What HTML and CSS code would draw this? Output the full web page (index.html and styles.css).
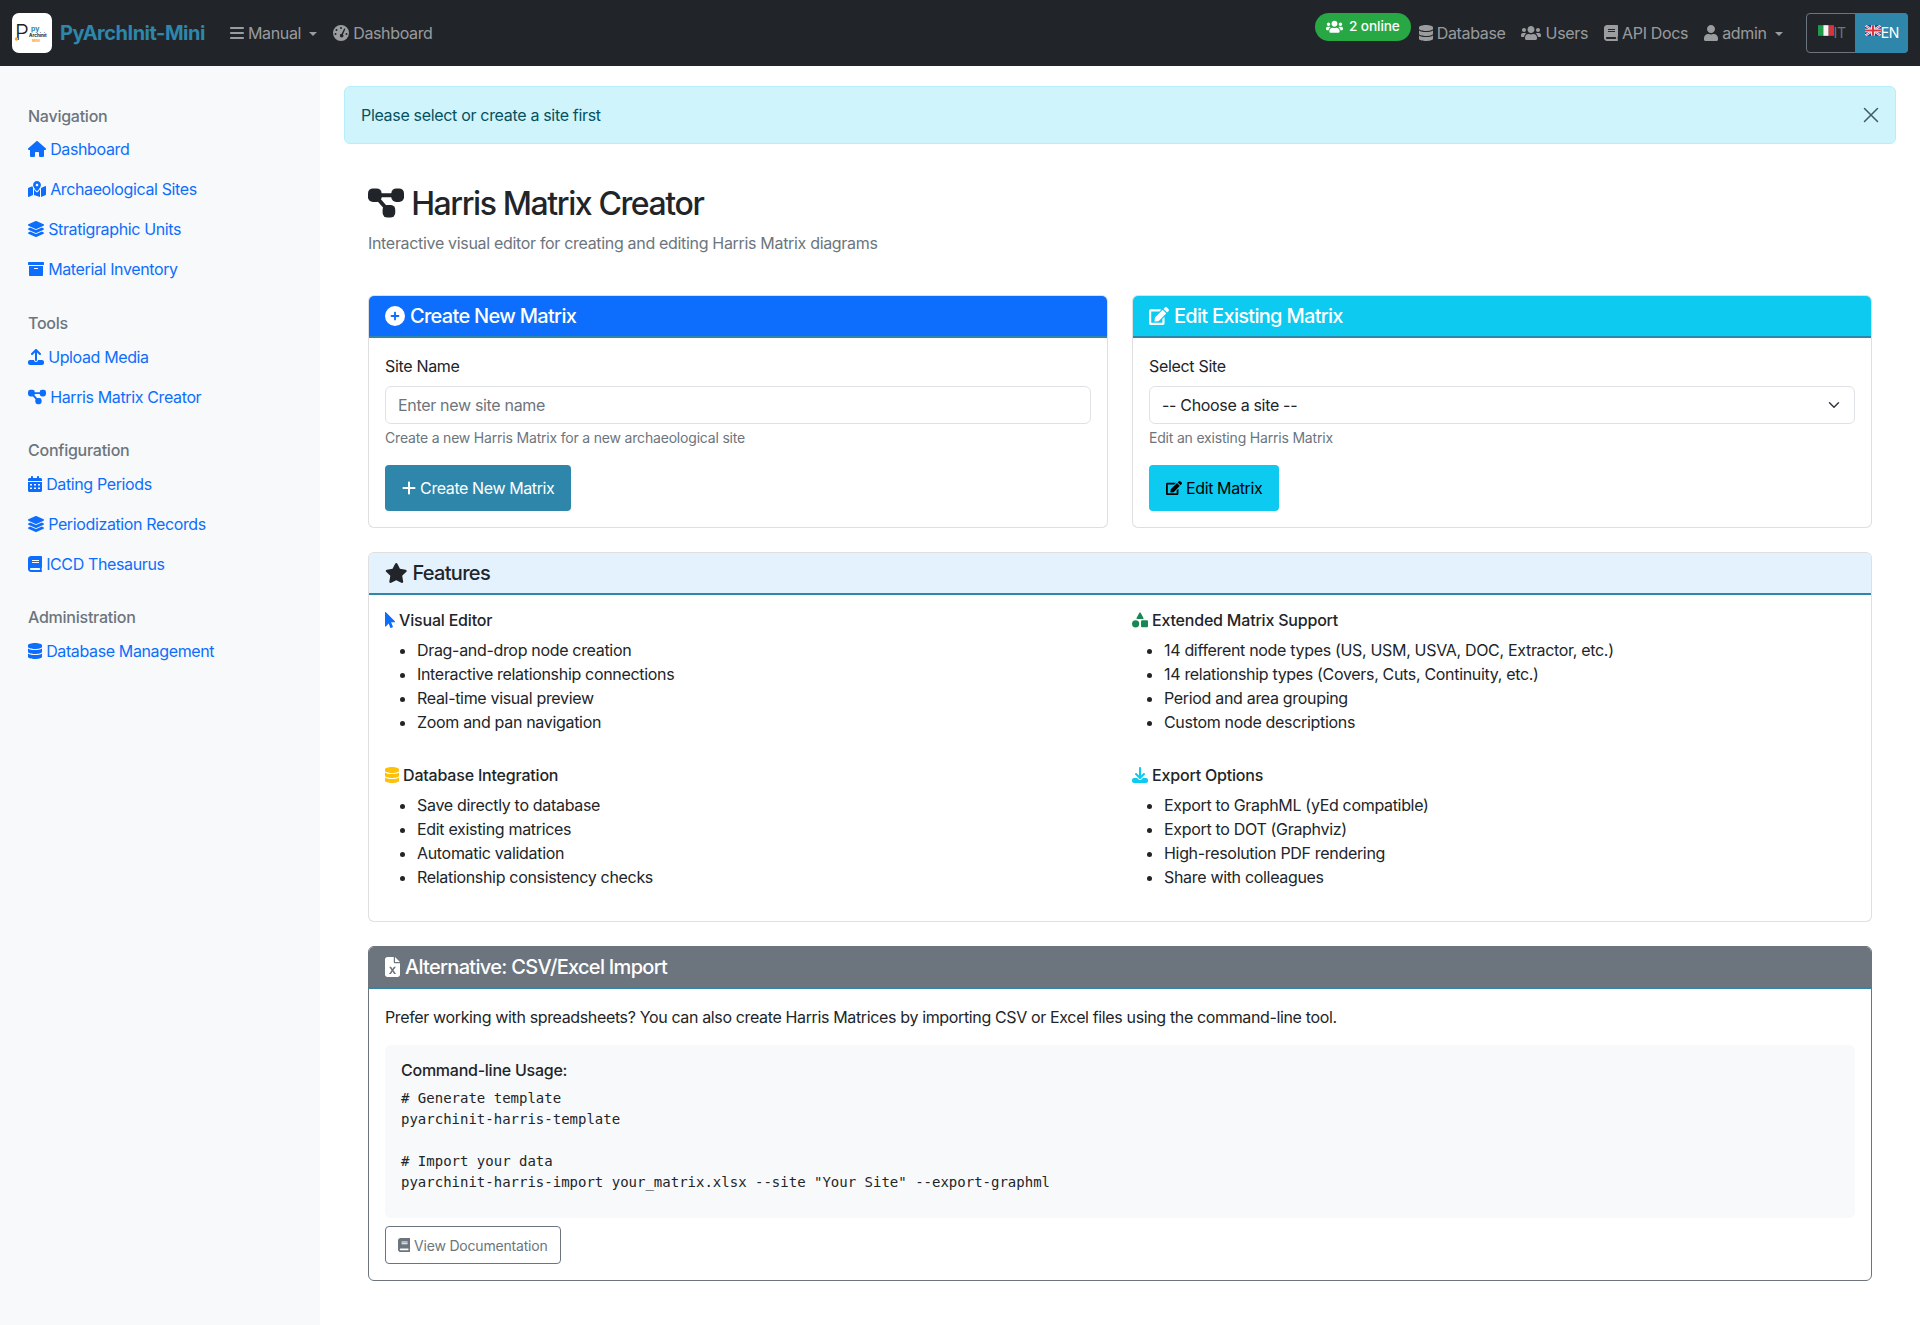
FILE: index.html
```html
<!DOCTYPE html>
<html>
<head>
	<meta charset="utf-8">
	<title>Harris Matrix Creator - PyArchInit-Mini</title>
	<link rel="stylesheet" href="styles.css">
</head>
<body>

<svg class="sprite" xmlns="http://www.w3.org/2000/svg">
	<symbol id="i-bars" viewBox="0 0 448 512"><path d="M0 96c0-17.700 14.300-32 32-32h384c17.700 0 32 14.300 32 32s-14.300 32-32 32H32C14.300 128 0 113.700 0 96zm0 160c0-17.700 14.300-32 32-32h384c17.700 0 32 14.300 32 32s-14.300 32-32 32H32c-17.700 0-32-14.300-32-32zm448 160c0 17.700-14.300 32-32 32H32c-17.700 0-32-14.300-32-32s14.300-32 32-32h384c17.700 0 32 14.300 32 32z"/></symbol>
	<symbol id="i-gauge" viewBox="0 0 512 512"><path fill-rule="evenodd" d="M256 0a256 256 0 1 1 0 512A256 256 0 1 1 256 0zM256 64a32 32 0 1 0 0 64 32 32 0 1 0 0-64zM112 128a32 32 0 1 0 0 64 32 32 0 1 0 0-64zM80 256a32 32 0 1 0 0 64 32 32 0 1 0 0-64zM432 256a32 32 0 1 0 0 64 32 32 0 1 0 0-64zM354 122L276 282a56 56 0 1 0 42 20L390 140a20 20 0 0 0-36-18z"/></symbol>
	<symbol id="i-users" viewBox="0 0 640 512"><path d="M96 224c35.300 0 64-28.700 64-64s-28.700-64-64-64-64 28.700-64 64 28.700 64 64 64zm448 0c35.300 0 64-28.700 64-64s-28.700-64-64-64-64 28.700-64 64 28.700 64 64 64zm32 32h-64c-17.600 0-33.500 7.100-45.100 18.600 40.300 22.100 68.900 62 75.100 109.400h66c17.700 0 32-14.300 32-32v-32c0-35.300-28.700-64-64-64zm-256 0c61.900 0 112-50.100 112-112S381.900 32 320 32 208 82.100 208 144s50.100 112 112 112zm76.800 32h-8.300c-20.800 10-43.900 16-68.500 16s-47.600-6-68.500-16h-8.300C179.600 288 128 339.600 128 403.200V432c0 26.500 21.500 48 48 48h288c26.500 0 48-21.500 48-48v-28.800c0-63.600-51.600-115.200-115.200-115.200zm-223.700-13.400C161.500 263.100 145.600 256 128 256H64c-35.300 0-64 28.700-64 64v32c0 17.700 14.300 32 32 32h65.900c6.300-47.400 34.900-87.300 75.200-109.400z"/></symbol>
	<symbol id="i-database" viewBox="0 0 448 512"><path d="M448 73.143v45.714C448 159.143 347.667 192 224 192S0 159.143 0 118.857V73.143C0 32.857 100.333 0 224 0s224 32.857 224 73.143zM448 176v102.857C448 319.143 347.667 352 224 352S0 319.143 0 278.857V176c48.125 33.143 136.208 48.572 224 48.572S399.874 209.143 448 176zm0 160v102.857C448 479.143 347.667 512 224 512S0 479.143 0 438.857V336c48.125 33.143 136.208 48.572 224 48.572S399.874 369.143 448 336z"/></symbol>
	<symbol id="i-book" viewBox="0 0 448 512"><path d="M448 360V24c0-13.300-10.700-24-24-24H96C43 0 0 43 0 96v320c0 53 43 96 96 96h328c13.300 0 24-10.700 24-24v-16c0-7.500-3.500-14.300-8.900-18.700-4.200-15.400-4.200-59.300 0-74.700 5.400-4.300 8.900-11.100 8.900-18.600zM128 134c0-3.300 2.700-6 6-6h212c3.300 0 6 2.700 6 6v20c0 3.300-2.700 6-6 6H134c-3.300 0-6-2.700-6-6v-20zm0 64c0-3.300 2.700-6 6-6h212c3.300 0 6 2.700 6 6v20c0 3.300-2.700 6-6 6H134c-3.300 0-6-2.700-6-6v-20zm253.400 250H96c-17.700 0-32-14.300-32-32 0-17.600 14.400-32 32-32h285.400c-1.900 17.100-1.900 46.900 0 64z"/></symbol>
	<symbol id="i-user" viewBox="0 0 448 512"><path d="M224 256c70.700 0 128-57.300 128-128S294.700 0 224 0 96 57.300 96 128s57.300 128 128 128zm89.600 32h-16.700c-22.200 10.200-46.900 16-72.900 16s-50.600-5.800-72.900-16h-16.700C60.200 288 0 348.200 0 422.400V464c0 26.500 21.500 48 48 48h352c26.500 0 48-21.500 48-48v-41.600c0-74.200-60.200-134.400-134.400-134.400z"/></symbol>
	<symbol id="i-home" viewBox="0 0 576 512"><path d="M575.800 255.500c0 18-15 32.100-32 32.100h-32l.7 160.200c0 2.700-.2 5.400-.5 8.100V472c0 22.100-17.900 40-40 40H456c-1.100 0-2.200 0-3.300-.1-1.400.1-2.800.1-4.200.1H392c-22.100 0-40-17.900-40-40v-88c0-17.700-14.300-32-32-32h-64c-17.700 0-32 14.300-32 32v88c0 22.100-17.900 40-40 40h-55.900c-1.500 0-3-.1-4.500-.2-1.200.1-2.400.2-3.600.2H104c-22.100 0-40-17.900-40-40V360c0-.9 0-1.900.1-2.800v-69.600H32c-18 0-32-14-32-32.100 0-9 3-17 10-24L266.400 8c7-7 15-8 22-8s15 2 21 7l255.400 224.500c8 7 12 15 11 24z"/></symbol>
	<symbol id="i-map" viewBox="0 0 576 512"><path d="M288 0c-69.590 0-126 56.410-126 126 0 56.260 82.350 158.800 113.900 196.020 6.390 7.540 17.820 7.540 24.200 0C331.650 284.800 414 182.260 414 126 414 56.410 357.590 0 288 0zm0 168c-23.200 0-42-18.800-42-42s18.800-42 42-42 42 18.800 42 42-18.800 42-42 42zM20.120 215.950A32.006 32.006 0 0 0 0 245.660v250.320c0 11.320 11.430 19.060 21.940 14.860L160 448V214.920c-8.840-15.980-16.070-31.540-21.250-46.420L20.120 215.950zM288 359.670c-14.070 0-27.380-6.180-36.510-16.960-19.660-23.200-40.570-49.620-59.490-76.720V448l192 64V266c-18.920 27.090-39.820 53.520-59.490 76.720-9.130 10.770-22.440 16.950-36.510 16.950zm266.060-198.510L416 224v288l139.880-55.950A31.996 31.996 0 0 0 576 426.340V176.020c0-11.320-11.430-19.060-21.940-14.860z"/></symbol>
	<symbol id="i-layers" viewBox="0 0 512 512"><path d="M12.410 148.020l232.940 105.670c6.800 3.090 14.490 3.090 21.290 0l232.940-105.670c16.550-7.510 16.550-32.520 0-40.030L266.650 2.310a25.607 25.607 0 0 0-21.290 0L12.410 107.980c-16.550 7.510-16.550 32.530 0 40.040zm487.180 88.280l-58.090-26.330-161.640 73.270c-7.560 3.430-15.590 5.170-23.860 5.170s-16.290-1.740-23.860-5.170L70.510 209.970l-58.100 26.330c-16.550 7.500-16.550 32.500 0 40l232.940 105.590c6.800 3.080 14.490 3.080 21.290 0L499.590 276.300c16.550-7.500 16.550-32.500 0-40zm0 127.800l-57.870-26.230-161.860 73.370c-7.560 3.430-15.590 5.170-23.860 5.170s-16.290-1.740-23.860-5.170L70.290 337.870 12.410 364.100c-16.550 7.500-16.550 32.500 0 40l232.940 105.590c6.800 3.080 14.490 3.080 21.290 0L499.590 404.100c16.550-7.500 16.550-32.500 0-40z"/></symbol>
	<symbol id="i-archive" viewBox="0 0 512 512"><path d="M32 448c0 17.700 14.300 32 32 32h384c17.700 0 32-14.300 32-32V160H32v288zm160-212c0-6.600 5.400-12 12-12h104c6.600 0 12 5.400 12 12v8c0 6.600-5.400 12-12 12H204c-6.600 0-12-5.400-12-12v-8zM480 32H32C14.300 32 0 46.300 0 64v48c0 8.800 7.200 16 16 16h480c8.800 0 16-7.200 16-16V64c0-17.700-14.300-32-32-32z"/></symbol>
	<symbol id="i-upload" viewBox="0 0 512 512"><path d="M288 109.300V352c0 17.700-14.300 32-32 32s-32-14.300-32-32V109.300l-73.400 73.400c-12.500 12.500-32.800 12.500-45.300 0s-12.500-32.800 0-45.300l128-128c12.500-12.500 32.800-12.500 45.300 0l128 128c12.500 12.500 12.500 32.800 0 45.300s-32.800 12.500-45.300 0L288 109.300zM64 352h128c0 35.300 28.700 64 64 64s64-28.700 64-64h128c35.300 0 64 28.700 64 64v32c0 35.300-28.700 64-64 64H64c-35.300 0-64-28.700-64-64v-32c0-35.300 28.700-64 64-64z"/></symbol>
	<symbol id="i-download" viewBox="0 0 512 512"><path d="M288 32c0-17.700-14.300-32-32-32s-32 14.300-32 32v242.700l-73.400-73.400c-12.500-12.500-32.800-12.500-45.300 0s-12.500 32.800 0 45.300l128 128c12.500 12.500 32.800 12.500 45.300 0l128-128c12.500-12.500 12.500-32.800 0-45.300s-32.800-12.500-45.300 0L288 274.700V32zM64 352c-35.300 0-64 28.700-64 64v32c0 35.300 28.700 64 64 64h384c35.300 0 64-28.700 64-64v-32c0-35.300-28.700-64-64-64H346.500l-45.300 45.300c-25 25-65.500 25-90.500 0L165.500 352H64z"/></symbol>
	<symbol id="i-diagram" viewBox="0 0 37 30"><rect width="14" height="14" rx="5"/><rect x="24" width="13" height="14" rx="5"/><rect x="15" y="17" width="13" height="13" rx="5"/><path d="M7 7H30M7 7L21 23" fill="none" stroke="currentColor" stroke-width="4"/></symbol>
	<symbol id="i-calendar" viewBox="0 0 448 512"><path fill-rule="evenodd" d="M128 0c17.700 0 32 14.300 32 32v32h128V32c0-17.700 14.300-32 32-32s32 14.300 32 32v32h48c26.500 0 48 21.500 48 48v48H0v-48c0-26.500 21.500-48 48-48h48V32c0-17.700 14.300-32 32-32zM0 192h448v272c0 26.500-21.500 48-48 48H48c-26.500 0-48-21.500-48-48V192zm64 64v48h64v-48H64zm128 0v48h64v-48h-64zm128 0v48h64v-48h-64zM64 368v48h64v-48H64zm128 0v48h64v-48h-64zm128 0v48h64v-48h-64z"/></symbol>
	<symbol id="i-plus-circle" viewBox="0 0 512 512"><path fill-rule="evenodd" d="M256 512a256 256 0 1 0 0-512 256 256 0 1 0 0 512zM232 344v-64h-64c-13.300 0-24-10.700-24-24s10.700-24 24-24h64v-64c0-13.300 10.700-24 24-24s24 10.700 24 24v64h64c13.300 0 24 10.700 24 24s-10.700 24-24 24h-64v64c0 13.300-10.700 24-24 24s-24-10.700-24-24z"/></symbol>
	<symbol id="i-plus" viewBox="0 0 448 512"><path d="M256 80c0-17.700-14.300-32-32-32s-32 14.300-32 32v144H48c-17.700 0-32 14.300-32 32s14.300 32 32 32h144v144c0 17.700 14.300 32 32 32s32-14.300 32-32V288h144c17.700 0 32-14.300 32-32s-14.300-32-32-32H256V80z"/></symbol>
	<symbol id="i-edit" viewBox="0 0 576 512"><path d="M402.600 83.200l90.200 90.200c3.800 3.800 3.800 10 0 13.800L274.400 405.600l-92.800 10.300c-12.400 1.400-22.900-9.100-21.500-21.500l10.300-92.800L388.800 83.200c3.800-3.800 10-3.800 13.800 0zm162-22.900l-48.800-48.800c-15.200-15.200-39.900-15.200-55.200 0l-35.400 35.400c-3.800 3.800-3.800 10 0 13.800l90.200 90.200c3.800 3.800 10 3.800 13.800 0l35.400-35.400c15.200-15.300 15.200-40 0-55.200zM384 346.200V448H64V128h229.800c3.200 0 6.200-1.300 8.500-3.500l40-40c7.600-7.600 2.200-20.500-8.500-20.500H48C21.500 64 0 85.500 0 112v352c0 26.500 21.500 48 48 48h352c26.500 0 48-21.500 48-48V306.200c0-10.700-12.900-16-20.500-8.500l-40 40c-2.200 2.300-3.500 5.300-3.500 8.500z"/></symbol>
	<symbol id="i-star" viewBox="0 0 576 512"><path d="M259.300 17.800L194 150.200 47.900 171.500c-26.200 3.800-36.700 36.100-17.700 54.600l105.700 103-25 145.500c-4.500 26.300 23.200 46 46.400 33.700L288 439.600l130.700 68.700c23.200 12.200 50.900-7.400 46.400-33.700l-25-145.500 105.700-103c19-18.500 8.500-50.800-17.700-54.600L382 150.200 316.700 17.800c-11.700-23.600-45.600-23.900-57.400 0z"/></symbol>
	<symbol id="i-pointer" viewBox="0 0 320 512"><path d="M302.189 329.126H196.105l55.831 135.993c3.889 9.428-.555 19.999-9.444 23.999l-49.165 21.427c-9.165 4-19.443-.571-23.332-9.714l-53.053-129.136-86.664 89.138C18.729 472.710 0 463.554 0 447.977V18.299C0 1.899 19.921-6.096 30.277 5.443l284.412 292.542c11.472 11.179 3.007 31.141-12.500 31.141z"/></symbol>
	<symbol id="i-shapes" viewBox="0 0 512 512"><path d="M256 16c-10 0-19 5-24 14l-84 150c-10 18 3 44 24 44h168c21 0 34-26 24-44L280 30c-5-9-14-14-24-14z"/><circle cx="116" cy="376" r="116"/><rect x="288" y="264" width="224" height="224" rx="36"/></symbol>
	<symbol id="i-file-x" viewBox="0 0 384 512"><path fill-rule="evenodd" d="M64 0C28.700 0 0 28.700 0 64v384c0 35.300 28.700 64 64 64h256c35.300 0 64-28.700 64-64V160H256c-17.700 0-32-14.300-32-32V0H64zm192 0v128h128L256 0zM155 248l37 56 37-56h50l-62 88 66 96h-50l-41-62-41 62h-50l66-96-62-88h50z"/></symbol>
</svg>

<nav class="navbar">
	<div class="nav-group">
		<a class="brand" href="#">
			<svg class="logo" viewBox="0 0 40 40">
				<rect width="40" height="40" rx="7" fill="#fff"/>
				<text x="3" y="27" class="logo-p">P</text>
				<text x="19" y="17.500" class="logo-py">py</text>
				<text x="17" y="23.500" class="logo-arch">Archinit</text>
				<text x="20" y="28.500" class="logo-mini">MINI</text>
				<circle cx="4.500" cy="26" r="1.700" fill="#f5a623"/>
			</svg>
			<span class="brand-name">PyArchInit-Mini</span>
		</a>
		<a class="nav-link drop" href="#"><svg class="ic w448"><use href="#i-bars"/></svg> Manual</a>
		<a class="nav-link" href="#"><svg class="ic"><use href="#i-gauge"/></svg> Dashboard</a>
	</div>
	<div class="nav-group">
		<span class="online"><svg class="ic w640"><use href="#i-users"/></svg> 2 online</span>
		<a class="nav-link" href="#"><svg class="ic w448"><use href="#i-database"/></svg> Database</a>
		<a class="nav-link" href="#"><svg class="ic w640"><use href="#i-users"/></svg> Users</a>
		<a class="nav-link" href="#"><svg class="ic w448"><use href="#i-book"/></svg> API Docs</a>
		<a class="nav-link drop" href="#"><svg class="ic w448"><use href="#i-user"/></svg> admin</a>
		<div class="lang">
			<a class="lang-btn" href="#">
				<svg class="flag" viewBox="0 0 3 2"><rect width="1" height="2" fill="#1f9a4a"/><rect x="1" width="1" height="2" fill="#f4f4f4"/><rect x="2" width="1" height="2" fill="#d8323c"/></svg>IT
			</a>
			<a class="lang-btn on" href="#">
				<svg class="flag" viewBox="0 0 30 20"><rect width="30" height="20" fill="#2a3f8f"/><path d="M0 0L30 20M30 0L0 20" stroke="#fff" stroke-width="4"/><path d="M0 0L30 20M30 0L0 20" stroke="#d8323c" stroke-width="1.500"/><path d="M15 0V20M0 10H30" stroke="#fff" stroke-width="7"/><path d="M15 0V20M0 10H30" stroke="#d8323c" stroke-width="4"/></svg>EN
			</a>
		</div>
	</div>
</nav>

<div class="layout">
	<aside class="sidebar">
		<div class="side-group">
			<h6 class="side-title">Navigation</h6>
			<a class="side-link" href="#"><svg class="ic w576"><use href="#i-home"/></svg> Dashboard</a>
			<a class="side-link" href="#"><svg class="ic w576"><use href="#i-map"/></svg> Archaeological Sites</a>
			<a class="side-link" href="#"><svg class="ic"><use href="#i-layers"/></svg> Stratigraphic Units</a>
			<a class="side-link" href="#"><svg class="ic"><use href="#i-archive"/></svg> Material Inventory</a>
		</div>
		<div class="side-group">
			<h6 class="side-title">Tools</h6>
			<a class="side-link" href="#"><svg class="ic"><use href="#i-upload"/></svg> Upload Media</a>
			<a class="side-link" href="#"><svg class="ic w576"><use href="#i-diagram"/></svg> Harris Matrix Creator</a>
		</div>
		<div class="side-group">
			<h6 class="side-title">Configuration</h6>
			<a class="side-link" href="#"><svg class="ic w448"><use href="#i-calendar"/></svg> Dating Periods</a>
			<a class="side-link" href="#"><svg class="ic"><use href="#i-layers"/></svg> Periodization Records</a>
			<a class="side-link" href="#"><svg class="ic w448"><use href="#i-book"/></svg> ICCD Thesaurus</a>
		</div>
		<div class="side-group">
			<h6 class="side-title">Administration</h6>
			<a class="side-link" href="#"><svg class="ic w448"><use href="#i-database"/></svg> Database Management</a>
		</div>
	</aside>

	<main class="main">
		<div class="alert">
			<span>Please select or create a site first</span>
			<svg class="alert-close" viewBox="0 0 16 16"><path d="M1.500 1.500L14.500 14.500M14.500 1.500L1.500 14.500" stroke="#3f5a62" stroke-width="1.500" stroke-linecap="round"/></svg>
		</div>

		<div class="content">
			<h2 class="page-title"><svg class="ic w576"><use href="#i-diagram"/></svg> Harris Matrix Creator</h2>
			<p class="page-sub">Interactive visual editor for creating and editing Harris Matrix diagrams</p>

			<div class="two-cols">
				<section class="card">
					<h5 class="card-head head-blue"><svg class="ic"><use href="#i-plus-circle"/></svg> Create New Matrix</h5>
					<div class="card-body">
						<label class="field-label" for="site">Site Name</label>
						<input class="field" type="text" id="site" placeholder="Enter new site name">
						<div class="hint">Create a new Harris Matrix for a new archaeological site</div>
						<a class="btn btn-teal" href="#"><svg class="ic w448"><use href="#i-plus"/></svg> Create New Matrix</a>
					</div>
				</section>
				<section class="card">
					<h5 class="card-head head-cyan"><svg class="ic"><use href="#i-edit"/></svg> Edit Existing Matrix</h5>
					<div class="card-body">
						<label class="field-label" for="pick">Select Site</label>
						<select class="field field-select" id="pick"><option>-- Choose a site --</option></select>
						<div class="hint">Edit an existing Harris Matrix</div>
						<a class="btn btn-cyan" href="#"><svg class="ic"><use href="#i-edit"/></svg> Edit Matrix</a>
					</div>
				</section>
			</div>

			<section class="card">
				<h5 class="card-head head-light"><svg class="ic w576"><use href="#i-star"/></svg> Features</h5>
				<div class="card-body features">
					<div class="feature">
						<h6 class="feature-title"><svg class="ic w320 c-blue"><use href="#i-pointer"/></svg> Visual Editor</h6>
						<ul>
							<li>Drag-and-drop node creation</li>
							<li>Interactive relationship connections</li>
							<li>Real-time visual preview</li>
							<li>Zoom and pan navigation</li>
						</ul>
					</div>
					<div class="feature">
						<h6 class="feature-title"><svg class="ic c-green"><use href="#i-shapes"/></svg> Extended Matrix Support</h6>
						<ul>
							<li>14 different node types (US, USM, USVA, DOC, Extractor, etc.)</li>
							<li>14 relationship types (Covers, Cuts, Continuity, etc.)</li>
							<li>Period and area grouping</li>
							<li>Custom node descriptions</li>
						</ul>
					</div>
					<div class="feature">
						<h6 class="feature-title"><svg class="ic w448 c-yellow"><use href="#i-database"/></svg> Database Integration</h6>
						<ul>
							<li>Save directly to database</li>
							<li>Edit existing matrices</li>
							<li>Automatic validation</li>
							<li>Relationship consistency checks</li>
						</ul>
					</div>
					<div class="feature">
						<h6 class="feature-title"><svg class="ic c-cyan"><use href="#i-download"/></svg> Export Options</h6>
						<ul>
							<li>Export to GraphML (yEd compatible)</li>
							<li>Export to DOT (Graphviz)</li>
							<li>High-resolution PDF rendering</li>
							<li>Share with colleagues</li>
						</ul>
					</div>
				</div>
			</section>

			<section class="card card-gray">
				<h5 class="card-head head-gray"><svg class="ic w384"><use href="#i-file-x"/></svg> Alternative: CSV/Excel Import</h5>
				<div class="card-body">
					<p class="import-text">Prefer working with spreadsheets? You can also create Harris Matrices by importing CSV or Excel files using the command-line tool.</p>
					<div class="usage">
						<h6 class="usage-title">Command-line Usage:</h6>
<pre># Generate template
pyarchinit-harris-template

# Import your data
pyarchinit-harris-import your_matrix.xlsx --site "Your Site" --export-graphml</pre>
					</div>
					<a class="btn btn-outline" href="#"><svg class="ic w448"><use href="#i-book"/></svg> View Documentation</a>
				</div>
			</section>
		</div>
	</main>
</div>

</body>
</html>
```

FILE: styles.css
```css
*{
	box-sizing: border-box;
}
body{
	margin: 0;
	font-family: Inter, "Liberation Sans", sans-serif;
	font-size: 16px;
	line-height: 1.5;
	color: #212529;
	background-color: #fff;
	letter-spacing: -.32px;
}
a{
	text-decoration: none;
}
h2,h5,h6,p,ul{
	margin: 0;
}
.sprite{
	display: none;
}
.ic{
	display: inline-block;
	width: 1em;
	height: 1em;
	vertical-align: -0.125em;
	fill: currentColor;
}
.w320{ width: .625em; }
.w384{ width: .75em; }
.w448{ width: .875em; }
.w576{ width: 1.125em; }
.w640{ width: 1.25em; }
.c-blue{ color: #0d6efd; }
.c-green{ color: #198754; }
.c-yellow{ color: #ffc107; }
.c-cyan{ color: #0dcaf0; }

/* top bar */
.navbar{
	height: 66px;
	padding: 0 12px;
	display: flex;
	align-items: center;
	justify-content: space-between;
	background-color: #212529;
}
.nav-group{
	display: flex;
	align-items: center;
}
.brand{
	display: flex;
	align-items: center;
	gap: 8px;
	margin-right: 17px;
}
.logo{
	width: 40px;
	height: 40px;
}
.logo text{
	font-family: Inter, sans-serif;
	letter-spacing: 0;
}
.logo-p{ font-size: 22px; font-weight: 300; fill: #222; }
.logo-py{ font-size: 7px; font-weight: 700; fill: #2e86ab; }
.logo-arch{ font-size: 4.600px; font-weight: 700; fill: #222; }
.logo-mini{ font-size: 3.500px; font-weight: 700; fill: #f5a623; }
.brand-name{
	font-size: 20px;
	font-weight: 700;
	letter-spacing: -.49px;
	color: #2e86ab;
}
.nav-link{
	padding: 8px;
	letter-spacing: -.36px;
	color: rgba(255,255,255,.55);
}
.drop::after{
	content: "";
	display: inline-block;
	margin-left: 8px;
	vertical-align: 3px;
	border-top: 4.800px solid;
	border-left: 4.800px solid transparent;
	border-right: 4.800px solid transparent;
}
.online{
	margin-bottom: 12px;
	height: 28px;
	padding: 0 11px 1px;
	display: flex;
	align-items: center;
	gap: 6px;
	border-radius: 14px;
	background-color: #28a745;
	color: #fff;
	font-size: 13.600px;
	font-weight: 500;
	letter-spacing: -.1px;
}
.lang{
	display: flex;
	margin-left: 15px;
	height: 40px;
	border: 1px solid #6c757d;
	border-radius: 4px;
	font-size: 14px;
}
.lang-btn{
	display: flex;
	align-items: center;
	padding-bottom: 2px;
	color: #6c757d;
	padding-left: 11px;
	padding-right: 9px;
}
.lang-btn.on{
	margin: -1px -1px -1px 0;
	padding-left: 10px;
	padding-right: 9px;
	background-color: #2e86ab;
	color: #fff;
	border-radius: 0 4px 4px 0;
}
.flag{
	width: 16px;
	height: 11px;
	margin-bottom: 4px;
}

/* page frame */
.layout{
	display: flex;
	min-height: 1259px;
}
.sidebar{
	width: 320px;
	flex: none;
	padding: 37.500px 28px 0;
	background-color: #f8f9fa;
}
.side-group{
	margin-bottom: 21.400px;
}
.side-title{
	margin-bottom: 2px;
	font-size: 16px;
	font-weight: 500;
	letter-spacing: -.25px;
	color: #6c757d;
}
.side-group:first-child .side-title{
	margin-bottom: 1.700px;
}
.side-link{
	display: block;
	padding: 8px 0;
	letter-spacing: -.37px;
	color: #0d6efd;
}
.main{
	flex: 1;
	min-width: 0;
	padding: 20px 24px 0;
}
.alert{
	height: 58px;
	margin-bottom: 16.500px;
	padding: 0 16px;
	display: flex;
	align-items: center;
	justify-content: space-between;
	background-color: #cff4fc;
	border: 1px solid #b6effb;
	border-radius: 6px;
	color: #055160;
}
.alert-close{
	width: 16px;
	height: 16px;
}
.content{
	padding: 24px;
}
.page-title{
	font-size: 32px;
	font-weight: 500;
	line-height: 1.2;
	letter-spacing: -1.4px;
	margin-bottom: 8px;
}
.page-sub{
	margin-bottom: 40.500px;
	color: #6c757d;
}
.two-cols{
	display: grid;
	grid-template-columns: 1fr 1fr;
	gap: 24px;
}

/* cards */
.card{
	margin-bottom: 24px;
	border: 1px solid rgba(0,0,0,.125);
	border-radius: 6px;
	background-color: #fff;
}
.card-gray{
	border-color: #6c757d;
}
.card-head{
	height: 42px;
	padding: 0 16px;
	display: flex;
	align-items: center;
	gap: 5px;
	font-size: 20px;
	font-weight: 500;
	line-height: 1.2;
	letter-spacing: -.7px;
	border-bottom: 2px solid #2e86ab;
	border-radius: 5px 5px 0 0;
}
.head-blue{ background-color: #0d6efd; color: #fff; }
.head-cyan{ background-color: #0dcaf0; color: #fff; }
.head-light{ background-color: #e3f2fd; color: #212529; }
.head-gray{ background-color: #6c757d; color: #fff; }
.card-body{
	padding: 16px;
}
.field-label{
	display: block;
	margin-bottom: 8px;
}
.field{
	display: block;
	width: 100%;
	height: 38px;
	padding: 0 12px;
	font: inherit;
	letter-spacing: inherit;
	color: #212529;
	background-color: #fff;
	border: 1px solid #dee2e6;
	border-radius: 6px;
}
.field::placeholder{
	color: #6c757d;
}
.field-select{
	appearance: none;
	background-image: url("data:image/svg+xml,%3csvg xmlns='http://www.w3.org/2000/svg' viewBox='0 0 16 16'%3e%3cpath fill='none' stroke='%23343a40' stroke-linecap='round' stroke-linejoin='round' stroke-width='2' d='m2 5 6 6 6-6'/%3e%3c/svg%3e");
	background-repeat: no-repeat;
	background-position: right 12px center;
	background-size: 16px 12px;
}
.hint{
	margin-top: 3px;
	margin-bottom: 16.500px;
	font-size: 14px;
	letter-spacing: -.19px;
	color: #6c757d;
}
.btn{
	display: inline-block;
	padding: 10px 16px;
	border: 1px solid transparent;
	border-radius: 4px;
	letter-spacing: -.4px;
}
.btn-teal{
	background-color: #2e86ab;
	color: #fff;
}
.btn-cyan{
	background-color: #0dcaf0;
	color: #000;
}
.btn-outline{
	padding: 7.750px 12px;
	font-size: 14px;
	letter-spacing: -.19px;
	color: #6c757d;
	border-color: #6c757d;
}

/* features */
.features{
	display: grid;
	grid-template-columns: 1fr 1fr;
	column-gap: 24px;
	row-gap: 16px;
}
.feature-title{
	margin-bottom: 8px;
	font-size: 16px;
	font-weight: 500;
	line-height: 1.2;
	letter-spacing: -.2px;
}
.feature ul{
	padding-left: 32px;
	margin-bottom: 16px;
}

/* import */
.import-text{
	margin-bottom: 16px;
	letter-spacing: -.36px;
}
.usage{
	margin-bottom: 8px;
	padding: 16px;
	border-radius: 6px;
	background-color: #f8f9fa;
}
.usage-title{
	margin-bottom: 8px;
	font-size: 16px;
	font-weight: 500;
	line-height: 1.2;
	letter-spacing: -.25px;
}
pre{
	margin: 0 0 8.500px;
	font-family: "DejaVu Sans Mono", monospace;
	font-size: 14px;
	line-height: 21px;
	letter-spacing: 0;
}
```
